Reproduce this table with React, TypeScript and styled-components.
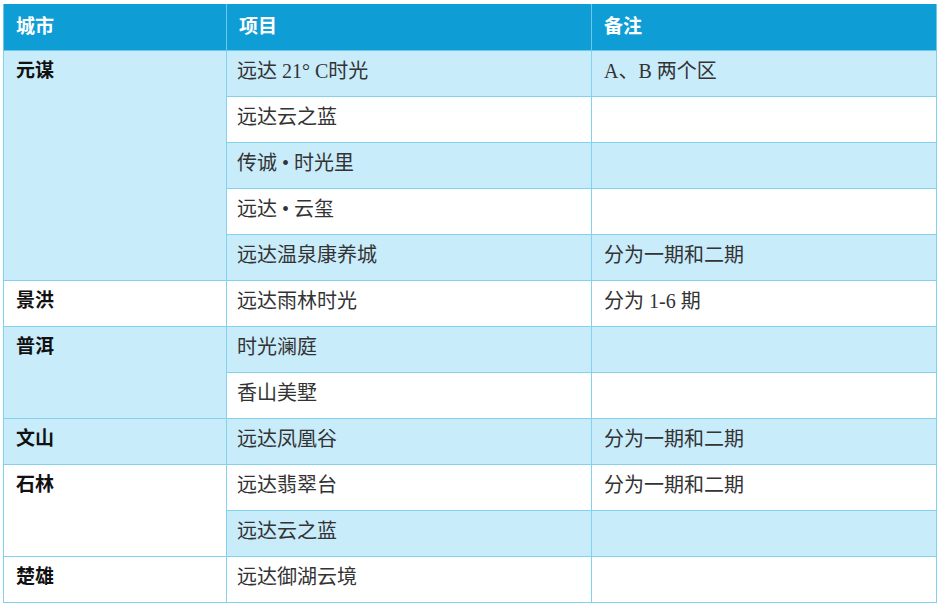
import React from "react";
import styled, { createGlobalStyle } from "styled-components";

const GlobalStyle = createGlobalStyle`
  html, body {
    margin: 0;
    padding: 0;
    background: #ffffff;
  }
`;

const Page = styled.div`
  padding: 4px 0 0 3px;
  font-family: "Liberation Serif", "Noto Sans CJK SC", serif;
`;

const Table = styled.table`
  width: 933px;
  border-collapse: collapse;
  table-layout: fixed;
  font-size: 20px;
`;

const HeadCell = styled.th<{ $w: number }>`
  width: ${(p) => p.$w}px;
  height: 46px;
  box-sizing: border-box;
  padding: 0 12px 4px;
  text-align: left;
  font-weight: 700;
  font-size: 19px;
  color: #ffffff;
  background: #0f9dd6;
  border: 1px solid #6cc8ec;
  border-top: none;
`;

const Cell = styled.td<{ $light: boolean; $city?: boolean; $pad?: number }>`
  height: 46px;
  box-sizing: border-box;
  padding: 7px 12px 0 ${(p) => p.$pad ?? 12}px;
  vertical-align: top;
  line-height: 26px;
  color: ${(p) => (p.$city ? "#111111" : "#333333")};
  font-weight: ${(p) => (p.$city ? 700 : 400)};
  font-size: ${(p) => (p.$city ? 19 : 20)}px;
  background: ${(p) => (p.$light ? "#c9ecfb" : "#ffffff")};
  border: 1px solid #80d2ee;
`;

type Group = { city: string; items: [string, string][] };

const groups: Group[] = [
  {
    city: "元谋",
    items: [
      ["远达 21° C时光", "A、B 两个区"],
      ["远达云之蓝", ""],
      ["传诚 • 时光里", ""],
      ["远达 • 云玺", ""],
      ["远达温泉康养城", "分为一期和二期"],
    ],
  },
  { city: "景洪", items: [["远达雨林时光", "分为 1-6 期"]] },
  {
    city: "普洱",
    items: [
      ["时光澜庭", ""],
      ["香山美墅", ""],
    ],
  },
  { city: "文山", items: [["远达凤凰谷", "分为一期和二期"]] },
  {
    city: "石林",
    items: [
      ["远达翡翠台", "分为一期和二期"],
      ["远达云之蓝", ""],
    ],
  },
  { city: "楚雄", items: [["远达御湖云境", ""]] },
];

export default function App() {
  let row = 0;
  return (
    <Page>
      <GlobalStyle />
      <Table>
        <thead>
          <tr>
            <HeadCell $w={223}>城市</HeadCell>
            <HeadCell $w={365}>项目</HeadCell>
            <HeadCell $w={345}>备注</HeadCell>
          </tr>
        </thead>
        <tbody>
          {groups.map((g) =>
            g.items.map(([project, note], i) => {
              const light = row % 2 === 0;
              row += 1;
              return (
                <tr key={`${g.city}-${i}`}>
                  {i === 0 && (
                    <Cell $light={light} $city rowSpan={g.items.length}>
                      {g.city}
                    </Cell>
                  )}
                  <Cell $light={light} $pad={10}>
                    {project}
                  </Cell>
                  <Cell $light={light}>{note}</Cell>
                </tr>
              );
            })
          )}
        </tbody>
      </Table>
    </Page>
  );
}
